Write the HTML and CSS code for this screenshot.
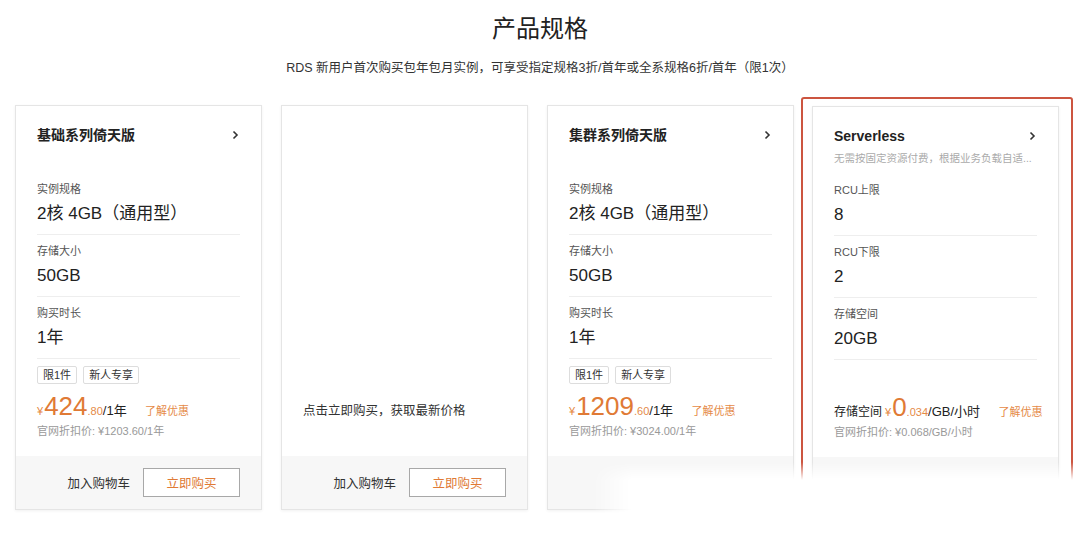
FILE: index.html
```html
<!DOCTYPE html>
<html lang="zh-CN">

<head>
  <meta charset="UTF-8">
  <title>产品规格</title>
  <link rel="stylesheet" href="styles.css">
</head>

<body>
  <div class="page">
    <h1 class="title">产品规格</h1>
    <p class="subtitle">RDS 新用户首次购买包年包月实例，可享受指定规格3折/首年或全系规格6折/首年（限1次）</p>

    <div class="cards">
      <!-- 基础系列 -->
      <div class="card">
        <div class="card-body">
          <div class="card-head">
            <div class="card-name">
              基础系列倚天版
              <svg class="chevron" width="7" height="10" viewBox="0 0 7 10"><path d="M1.5 1.5 L5 5 L1.5 8.5" fill="none" stroke="#333" stroke-width="1.6"/></svg>
            </div>
          </div>
          <div class="spec">
            <div class="spec-label">实例规格</div>
            <div class="spec-value">2核 4GB（通用型）</div>
          </div>
          <div class="spec">
            <div class="spec-label">存储大小</div>
            <div class="spec-value">50GB</div>
          </div>
          <div class="spec">
            <div class="spec-label">购买时长</div>
            <div class="spec-value">1年</div>
          </div>
          <div class="tags">
            <span class="tag">限1件</span>
            <span class="tag">新人专享</span>
          </div>
          <div class="promo">
            <div class="price">
              <span class="yen">¥</span><span class="big">424</span><span class="cents">.80</span><span class="unit">/1年</span>
              <a class="more">了解优惠</a>
            </div>
            <div class="orig">官网折扣价: ¥1203.60/1年</div>
          </div>
        </div>
        <div class="card-foot">
          <span class="cart">加入购物车</span>
          <button class="buy">立即购买</button>
        </div>
      </div>

      <!-- 空卡片 -->
      <div class="card">
        <div class="card-body empty">
          <div class="hint">点击立即购买，获取最新价格</div>
        </div>
        <div class="card-foot">
          <span class="cart">加入购物车</span>
          <button class="buy">立即购买</button>
        </div>
      </div>

      <!-- 集群系列 -->
      <div class="card">
        <div class="card-body">
          <div class="card-head">
            <div class="card-name">
              集群系列倚天版
              <svg class="chevron" width="7" height="10" viewBox="0 0 7 10"><path d="M1.5 1.5 L5 5 L1.5 8.5" fill="none" stroke="#333" stroke-width="1.6"/></svg>
            </div>
          </div>
          <div class="spec">
            <div class="spec-label">实例规格</div>
            <div class="spec-value">2核 4GB（通用型）</div>
          </div>
          <div class="spec">
            <div class="spec-label">存储大小</div>
            <div class="spec-value">50GB</div>
          </div>
          <div class="spec">
            <div class="spec-label">购买时长</div>
            <div class="spec-value">1年</div>
          </div>
          <div class="tags">
            <span class="tag">限1件</span>
            <span class="tag">新人专享</span>
          </div>
          <div class="promo">
            <div class="price">
              <span class="yen">¥</span><span class="big">1209</span><span class="cents">.60</span><span class="unit">/1年</span>
              <a class="more">了解优惠</a>
            </div>
            <div class="orig">官网折扣价: ¥3024.00/1年</div>
          </div>
        </div>
        <div class="card-foot"></div>
      </div>

      <!-- Serverless -->
      <div class="selected">
        <div class="card">
          <div class="card-body">
            <div class="card-head">
              <div class="card-name">
                Serverless
                <svg class="chevron" width="7" height="10" viewBox="0 0 7 10"><path d="M1.5 1.5 L5 5 L1.5 8.5" fill="none" stroke="#333" stroke-width="1.6"/></svg>
              </div>
              <div class="card-desc">无需按固定资源付费，根据业务负载自适...</div>
            </div>
            <div class="spec">
              <div class="spec-label">RCU上限</div>
              <div class="spec-value">8</div>
            </div>
            <div class="spec">
              <div class="spec-label">RCU下限</div>
              <div class="spec-value">2</div>
            </div>
            <div class="spec">
              <div class="spec-label">存储空间</div>
              <div class="spec-value">20GB</div>
            </div>
            <div class="promo">
              <div class="price">
                <span class="prefix">存储空间</span><span class="yen">¥</span><span class="big">0</span><span class="cents">.034</span><span class="unit">/GB/小时</span>
                <a class="more">了解优惠</a>
              </div>
              <div class="orig">官网折扣价: ¥0.068/GB/小时</div>
            </div>
          </div>
          <div class="card-foot"></div>
        </div>
      </div>
    </div>

    <!-- faded bottom-right corner of the screenshot -->
    <div class="fade"></div>
  </div>
</body>

</html>
```

FILE: styles.css
```css
body {
  margin: 0;
  font-family: "Liberation Sans", "Noto Sans CJK SC", sans-serif;
  color: #333;
  background-color: #fff;
}

.page {
  position: relative;
  width: 1080px;
  height: 550px;
  overflow: hidden;
}

.title {
  margin: 13px 0 0;
  font-size: 24px;
  line-height: 32px;
  font-weight: 400;
  text-align: center;
  color: #222;
}

.subtitle {
  margin: 15px 0 0;
  font-size: 12.5px;
  line-height: 16px;
  text-align: center;
  color: #333;
}

.cards {
  display: flex;
  gap: 19px;
  padding-left: 15px;
  margin-top: 21px;
}

.card {
  display: flex;
  flex-direction: column;
  width: 247px;
  height: 405px;
  box-sizing: border-box;
  border: 1px solid #e5e5e5;
  background-color: #fff;
  box-shadow: 0 1px 3px rgba(0, 0, 0, 0.06);
  margin-top: 8px;
}

.card-body {
  flex: 1;
  display: flex;
  flex-direction: column;
  padding: 19px 21px 17px;
}

.card-head {
  height: 48px;
}

.card-name {
  display: flex;
  justify-content: space-between;
  align-items: center;
  font-size: 14px;
  line-height: 20px;
  font-weight: 600;
  color: #222;
}

.chevron {
  margin-right: 1px;
}

.card-desc {
  margin-top: 4px;
  font-size: 10.5px;
  line-height: 16px;
  color: #aaa;
  white-space: nowrap;
}

.spec {
  padding: 8px 0 8px;
  border-bottom: 1px solid #eee;
}

.spec:first-of-type {
  padding-top: 0;
}

.spec-label {
  font-size: 11px;
  line-height: 16px;
  color: #555;
}

.spec-value {
  margin-top: 5px;
  font-size: 17px;
  line-height: 24px;
  color: #222;
}

.tags {
  display: flex;
  gap: 6px;
  margin-top: 7px;
}

.tag {
  height: 18px;
  line-height: 16px;
  box-sizing: border-box;
  padding: 0 5px;
  border: 1px solid #ddd;
  border-radius: 2px;
  font-size: 11px;
  color: #333;
}

.promo {
  margin-top: auto;
}

.price {
  height: 34px;
  line-height: 34px;
  white-space: nowrap;
  color: #222;
}

.prefix {
  font-size: 12px;
  margin-right: 3px;
}

.yen {
  font-size: 11px;
  color: #e58a47;
  margin-right: 1px;
}

.big {
  font-size: 26px;
  color: #e07a35;
}

.cents {
  font-size: 11px;
  color: #e58a47;
}

.unit {
  font-size: 13px;
  color: #222;
}

.more {
  margin-left: 14px;
  font-size: 11px;
  color: #e58a47;
}

.orig {
  font-size: 11px;
  line-height: 16px;
  color: #999;
}

.empty {
  justify-content: flex-end;
  padding-bottom: 35px;
}

.hint {
  font-size: 12.5px;
  line-height: 20px;
  color: #333;
}

.card-foot {
  display: flex;
  justify-content: flex-end;
  align-items: center;
  gap: 13px;
  height: 53px;
  padding-right: 21px;
  background-color: #f7f7f7;
}

.cart {
  font-size: 12.5px;
  color: #333;
}

.buy {
  width: 97px;
  height: 29px;
  border: 1px solid #a8a8a8;
  background-color: #fff;
  color: #e07a35;
  font-family: inherit;
  font-size: 12.5px;
  padding: 0;
}

.selected {
  margin-left: -12px;
  padding: 7px 12px 0 9px;
  border: 2px solid #cc5540;
  border-radius: 3px;
  height: 460px;
}

.selected .card {
  margin-top: 0;
}

.fade {
  position: absolute;
  left: 592px;
  top: 462px;
  right: 0;
  bottom: 0;
  background-color: #fff;
  mask-image: linear-gradient(to right, transparent, #000 40px), linear-gradient(to bottom, transparent, #000 18px);
  mask-composite: intersect;
}
```
